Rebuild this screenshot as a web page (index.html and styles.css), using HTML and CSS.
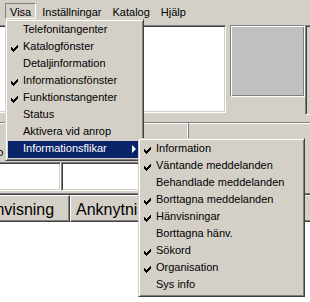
FILE: index.html
```html
<!DOCTYPE html>
<html lang="sv">
<head>
    <meta charset="UTF-8">
    <meta name="viewport" content="width=device-width, initial-scale=1.0">
    <title>Visa</title>
    <link rel="stylesheet" href="styles.css">
</head>
<body>
    <!-- Menyrad -->
    <div class="menubar">
        <span class="menu-title open">Visa</span>
        <span class="menu-title">Inställningar</span>
        <span class="menu-title">Katalog</span>
        <span class="menu-title">Hjälp</span>
    </div>

    <!-- Fönstrets paneler -->
    <div class="panes">
        <div class="pane-white"></div>
        <div class="pane-side">
            <div class="pane-grey"></div>
        </div>
        <div class="pane-dark"></div>
    </div>

    <div class="infobar">
        <div class="info-cell first"></div>
        <div class="info-cell"></div>
    </div>

    <div class="labels"><span>Info</span></div>

    <div class="fields">
        <div class="field first"></div>
        <div class="field second"></div>
    </div>

    <!-- Lista -->
    <div class="listview">
        <div class="list-head">
            <div class="col col-1">Hänvisning</div>
            <div class="col col-2">Anknytning</div>
            <div class="col col-3">Namn</div>
        </div>
        <div class="list-body"></div>
    </div>

    <!-- Visa-menyn -->
    <ul class="menu menu-visa">
        <li>Telefonitangenter</li>
        <li class="checked"><svg class="check" width="7" height="7" viewBox="0 0 7 7"><path d="M6 0h1v1h-1z M5 1h2v1h-2z M0 2h1v1h-1z M4 2h3v1h-3z M0 3h2v1h-2z M3 3h3v1h-3z M0 4h5v1h-5z M1 5h3v1h-3z M2 6h1v1h-1z"/></svg>Katalogfönster</li>
        <li>Detaljinformation</li>
        <li class="checked"><svg class="check" width="7" height="7" viewBox="0 0 7 7"><path d="M6 0h1v1h-1z M5 1h2v1h-2z M0 2h1v1h-1z M4 2h3v1h-3z M0 3h2v1h-2z M3 3h3v1h-3z M0 4h5v1h-5z M1 5h3v1h-3z M2 6h1v1h-1z"/></svg>Informationsfönster</li>
        <li class="checked"><svg class="check" width="7" height="7" viewBox="0 0 7 7"><path d="M6 0h1v1h-1z M5 1h2v1h-2z M0 2h1v1h-1z M4 2h3v1h-3z M0 3h2v1h-2z M3 3h3v1h-3z M0 4h5v1h-5z M1 5h3v1h-3z M2 6h1v1h-1z"/></svg>Funktionstangenter</li>
        <li>Status</li>
        <li>Aktivera vid anrop</li>
        <li class="active">Informationsflikar<span class="arrow"></span></li>
    </ul>

    <!-- Undermeny Informationsflikar -->
    <ul class="menu menu-flikar">
        <li class="checked"><svg class="check" width="7" height="7" viewBox="0 0 7 7"><path d="M6 0h1v1h-1z M5 1h2v1h-2z M0 2h1v1h-1z M4 2h3v1h-3z M0 3h2v1h-2z M3 3h3v1h-3z M0 4h5v1h-5z M1 5h3v1h-3z M2 6h1v1h-1z"/></svg>Information</li>
        <li class="checked"><svg class="check" width="7" height="7" viewBox="0 0 7 7"><path d="M6 0h1v1h-1z M5 1h2v1h-2z M0 2h1v1h-1z M4 2h3v1h-3z M0 3h2v1h-2z M3 3h3v1h-3z M0 4h5v1h-5z M1 5h3v1h-3z M2 6h1v1h-1z"/></svg>Väntande meddelanden</li>
        <li>Behandlade meddelanden</li>
        <li class="checked"><svg class="check" width="7" height="7" viewBox="0 0 7 7"><path d="M6 0h1v1h-1z M5 1h2v1h-2z M0 2h1v1h-1z M4 2h3v1h-3z M0 3h2v1h-2z M3 3h3v1h-3z M0 4h5v1h-5z M1 5h3v1h-3z M2 6h1v1h-1z"/></svg>Borttagna meddelanden</li>
        <li class="checked"><svg class="check" width="7" height="7" viewBox="0 0 7 7"><path d="M6 0h1v1h-1z M5 1h2v1h-2z M0 2h1v1h-1z M4 2h3v1h-3z M0 3h2v1h-2z M3 3h3v1h-3z M0 4h5v1h-5z M1 5h3v1h-3z M2 6h1v1h-1z"/></svg>Hänvisningar</li>
        <li>Borttagna hänv.</li>
        <li class="checked"><svg class="check" width="7" height="7" viewBox="0 0 7 7"><path d="M6 0h1v1h-1z M5 1h2v1h-2z M0 2h1v1h-1z M4 2h3v1h-3z M0 3h2v1h-2z M3 3h3v1h-3z M0 4h5v1h-5z M1 5h3v1h-3z M2 6h1v1h-1z"/></svg>Sökord</li>
        <li class="checked"><svg class="check" width="7" height="7" viewBox="0 0 7 7"><path d="M6 0h1v1h-1z M5 1h2v1h-2z M0 2h1v1h-1z M4 2h3v1h-3z M0 3h2v1h-2z M3 3h3v1h-3z M0 4h5v1h-5z M1 5h3v1h-3z M2 6h1v1h-1z"/></svg>Organisation</li>
        <li>Sys info</li>
    </ul>
</body>
</html>
```

FILE: styles.css
```css
/* Windows classic look */
body {
    margin: 0;
    width: 310px;
    height: 302px;
    overflow: hidden;
    position: relative;
    background-color: #d4d0c8;
    color: #000;
    font-family: "Liberation Sans", Arial, sans-serif;
    font-size: 11px;
}

/* Menu bar */
.menubar {
    display: flex;
    height: 20px;
    box-sizing: border-box;
    padding: 3px 0 0 5px;
}

.menu-title {
    height: 16px;
    box-sizing: border-box;
    padding: 2px 4px 0;
    margin-right: 1px;
    line-height: 12px;
    border: 1px solid transparent;
    white-space: nowrap;
}

.menu-title.open {
    border-color: #808080 #fff #fff #808080;
}

/* Top panes */
.panes {
    display: flex;
    width: 344px;
    height: 90px;
    margin: 5px 0 0 -4px;
}

.pane-white {
    width: 230px;
    height: 88px;
    box-sizing: border-box;
    background-color: #fff;
    border: 1px solid;
    border-color: #808080 #fff #fff #808080;
    box-shadow: inset 1px 1px #404040, inset -1px -1px #d4d0c8;
}

.pane-side {
    width: 75px;
    margin-left: 4px;
}

.pane-grey {
    height: 72px;
    box-sizing: border-box;
    background-color: #c0c0c0;
    border: 1px solid;
    border-color: #808080 #fff #fff #808080;
    box-shadow: inset 1px 1px #fff, inset -1px -1px #808080;
}

.pane-dark {
    flex: 1;
    border: 1px solid;
    border-color: #808080 #fff #fff #808080;
    box-shadow: inset 1px 1px #404040;
}

/* Info row */
.infobar {
    display: flex;
    width: 344px;
    height: 17px;
    margin: 7px 0 0 -4px;
}

.info-cell {
    flex: 1;
    border-top: 1px solid #808080;
    box-shadow: inset 0 1px #fff;
}

.info-cell.first {
    flex: none;
    width: 192px;
    border-right: 1px solid #808080;
    box-shadow: inset 0 1px #fff, inset -1px 0 #fff;
}

.labels {
    height: 23px;
    box-sizing: border-box;
    padding-top: 3px;
    line-height: 20px;
}

.labels span {
    margin-left: -15px;
}

/* Input fields */
.fields {
    display: flex;
    height: 29px;
    margin-left: -4px;
}

.field {
    box-sizing: border-box;
    background-color: #fff;
    border: 1px solid;
    border-color: #808080 #fff #fff #808080;
    box-shadow: inset 1px 1px #404040, inset -1px -1px #d4d0c8;
}

.field.first {
    width: 65px;
}

.field.second {
    width: 244px;
}

/* List view */
.listview {
    width: 344px;
    height: 120px;
    margin: 2px 0 0 -4px;
    padding: 1px;
    overflow: hidden;
    background-color: #fff;
    border: 1px solid;
    border-color: #808080 #fff #fff #808080;
    box-shadow: inset 1px 1px #404040;
}

.list-head {
    display: flex;
    margin-left: -29px;
}

.col {
    height: 27px;
    box-sizing: border-box;
    padding: 3px 0 0 5px;
    line-height: 21px;
    font-size: 16px;
    white-space: nowrap;
    overflow: hidden;
    background-color: #d4d0c8;
    border: 1px solid;
    border-color: #fff #404040 #404040 #fff;
    box-shadow: inset -1px -1px #808080;
}

.col-1 {
    width: 101px;
}

.col-2 {
    width: 130px;
}

.col-3 {
    width: 140px;
}

/* Drop-down menus */
.menu {
    position: absolute;
    margin: 0;
    padding: 2px;
    list-style: none;
    background-color: #d4d0c8;
    border: 1px solid;
    border-color: #d4d0c8 #404040 #404040 #d4d0c8;
    box-shadow: inset 1px 1px #fff, inset -1px -1px #808080;
}

.menu-visa {
    left: 5px;
    top: 19px;
    width: 133px;
}

.menu-flikar {
    left: 138px;
    top: 138px;
    width: 161px;
}

.menu li {
    position: relative;
    height: 17px;
    box-sizing: border-box;
    padding: 0 0 2px 15px;
    line-height: 15px;
    white-space: nowrap;
}

.menu li.active {
    background-color: #0a246a;
    color: #fff;
}

.check {
    position: absolute;
    left: 3px;
    top: 6px;
    shape-rendering: crispEdges;
}

.arrow {
    position: absolute;
    right: 5px;
    top: 4px;
    border-left: 4px solid #fff;
    border-top: 4px solid transparent;
    border-bottom: 4px solid transparent;
}
```
